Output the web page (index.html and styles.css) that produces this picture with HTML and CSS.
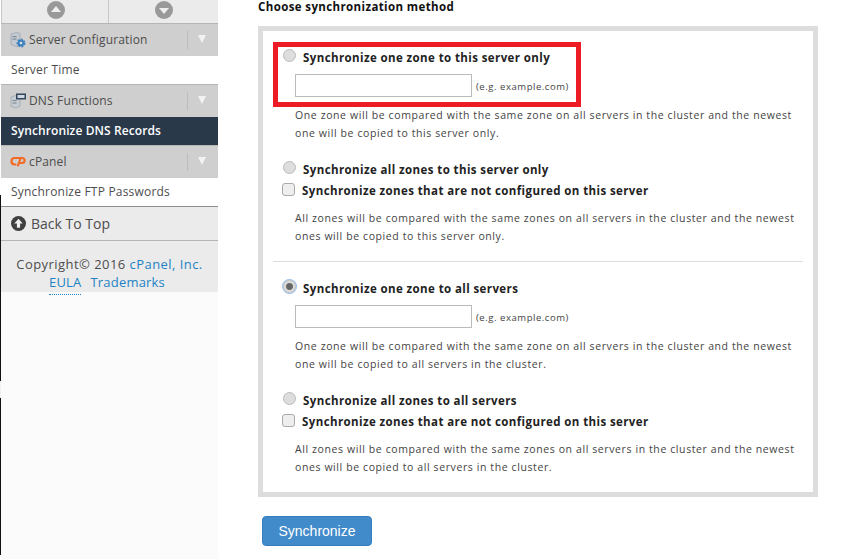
FILE: index.html
```html
<!DOCTYPE html>
<html lang="en">
<head>
    <meta charset="UTF-8">
    <title>Synchronize DNS Records</title>
    <link rel="stylesheet" href="styles.css">
</head>
<body>
    <div class="page">
        <div class="left-edge"></div>

        <!-- Sidebar -->
        <div class="sidebar">
            <div class="scroll-bar">
                <div class="scroll-cell up">
                    <svg width="20" height="20" viewBox="0 0 20 20"><circle cx="10" cy="10" r="9" fill="#999"/><path d="M10 6L15 12H5Z" fill="#eee"/></svg>
                </div>
                <div class="scroll-cell down">
                    <svg width="20" height="20" viewBox="0 0 20 20"><circle cx="10" cy="10" r="9" fill="#999"/><path d="M10 14L15 8H5Z" fill="#eee"/></svg>
                </div>
            </div>

            <div class="nav-group">
                <svg class="nav-icon" width="16" height="16" viewBox="0 0 16 16">
                    <path d="M1 2L7 0.500L10 1.500V9L7 15L1 12.500Z" fill="#c3cad1" stroke="#98a2ad" stroke-width="0.7"/>
                    <rect x="2.500" y="4" width="4" height="1.200" fill="#7e8a96"/>
                    <rect x="2.500" y="6.500" width="4" height="1.200" fill="#7e8a96"/>
                    <circle cx="11" cy="11" r="3.300" fill="#3f81bd" stroke="#3f81bd" stroke-width="2.400" stroke-dasharray="1.700 1.300"/>
                    <circle cx="11" cy="11" r="3.200" fill="#3f81bd"/>
                    <circle cx="11" cy="11" r="1.300" fill="#d6e4f0"/>
                </svg>
                <span class="nav-label">Server Configuration</span>
                <span class="nav-arrow"></span>
            </div>
            <div class="nav-item">Server Time</div>

            <div class="nav-group">
                <svg class="nav-icon" width="16" height="16" viewBox="0 0 16 16">
                    <path d="M1 4L6 2.500L10 4V13L6 15L1 13.500Z" fill="#c6ccd2" stroke="#98a2ad" stroke-width="0.7"/>
                    <rect x="2.500" y="7" width="4" height="1.100" fill="#7e8a96"/>
                    <rect x="2.500" y="9.500" width="4" height="1.100" fill="#7e8a96"/>
                    <rect x="6" y="0.500" width="10" height="6" fill="#33475e"/>
                    <rect x="7.500" y="2" width="7" height="3" fill="#cfd8e2"/>
                </svg>
                <span class="nav-label">DNS Functions</span>
                <span class="nav-arrow"></span>
            </div>
            <div class="nav-item active">Synchronize DNS Records</div>

            <div class="nav-group cpanel">
                <svg class="nav-icon" width="16" height="16" viewBox="0 0 16 16">
                    <path d="M7.500 4H4.500C0.500 4 0.500 10.500 4.500 10.500H5.500" fill="none" stroke="#f26b22" stroke-width="2.200" stroke-linecap="round"/>
                    <path d="M7.500 4H12C15.500 4 15.500 9 12 9H10.500M10.500 4.500L8 11.500" fill="none" stroke="#f26b22" stroke-width="2.200" stroke-linecap="round"/>
                </svg>
                <span class="nav-label">cPanel</span>
                <span class="nav-arrow"></span>
            </div>
            <div class="nav-item last">Synchronize FTP Passwords</div>

            <div class="back-top">
                <svg width="15" height="15" viewBox="0 0 16 16"><circle cx="8" cy="8" r="8" fill="#3f3f3f"/><path d="M8 3L12.500 8H9.700V12.500H6.300V8H3.500Z" fill="#eee"/></svg>
                <span>Back To Top</span>
            </div>

            <div class="copyright">
                <div>Copyright© 2016 <a href="#">cPanel, Inc.</a></div>
                <div class="copyright-links"><a href="#" class="eula">EULA</a><a href="#">Trademarks</a></div>
            </div>
        </div>

        <!-- Main Content -->
        <div class="main">
            <h4 class="section-title">Choose synchronization method</h4>
            <div class="method-box">
                <div class="option highlighted">
                    <label class="option-label"><span class="radio top"></span>Synchronize one zone to this server only</label>
                    <div class="zone-row">
                        <input type="text" class="zone-input">
                        <span class="hint">(e.g. example.com)</span>
                    </div>
                </div>
                <p class="desc first">One zone will be compared with the same zone on all servers in the cluster and the newest<br>one will be copied to this server only.</p>

                <div class="option second">
                    <label class="option-label"><span class="radio"></span>Synchronize all zones to this server only</label>
                    <label class="check-label"><span class="checkbox"></span>Synchronize zones that are not configured on this server</label>
                </div>
                <p class="desc tight">All zones will be compared with the same zones on all servers in the cluster and the newest<br>ones will be copied to this server only.</p>

                <hr class="divider">

                <div class="option">
                    <label class="option-label"><span class="radio checked"></span>Synchronize one zone to all servers</label>
                    <div class="zone-row">
                        <input type="text" class="zone-input">
                        <span class="hint">(e.g. example.com)</span>
                    </div>
                </div>
                <p class="desc">One zone will be compared with the same zone on all servers in the cluster and the newest<br>one will be copied to all servers in the cluster.</p>

                <div class="option second">
                    <label class="option-label"><span class="radio"></span>Synchronize all zones to all servers</label>
                    <label class="check-label"><span class="checkbox"></span>Synchronize zones that are not configured on this server</label>
                </div>
                <p class="desc tight">All zones will be compared with the same zones on all servers in the cluster and the newest<br>ones will be copied to all servers in the cluster.</p>
            </div>
            <button class="sync-button">Synchronize</button>
        </div>
    </div>
</body>
</html>
```

FILE: styles.css
```css
* {
    margin: 0;
    padding: 0;
    box-sizing: border-box;
}

body {
    font-family: "Open Sans", sans-serif;
    background: #fff;
    overflow: hidden;
}

a {
    color: #1e82c4;
    text-decoration: none;
}

.page {
    display: flex;
    height: 559px;
}

.left-edge {
    width: 1px;
    background: linear-gradient(#fff 195px, #111 195px, #111 381px, #f2f2f2 381px, #f2f2f2 398px, #111 398px, #111 555px, #fff 555px);
}

/* Sidebar */
.sidebar {
    width: 217px;
    background: #fbfbfb;
    color: #4d4d4d;
    font-size: 12px;
    letter-spacing: 0.2px;
}

.scroll-bar {
    display: flex;
    height: 24px;
    background: #ebebeb;
    border-bottom: 1px solid #b5b5b5;
}

.scroll-cell {
    display: flex;
    justify-content: center;
    align-items: flex-start;
    border-left: 1px solid #c8c8c8;
}

.scroll-cell.up {
    width: 107px;
    padding-left: 1px;
}

.scroll-cell.down {
    width: 110px;
}

.nav-group {
    display: flex;
    align-items: center;
    height: 32px;
    padding-left: 9px;
    background: #cfcfcf;
}

.nav-group.cpanel {
    height: 33px;
    border-top: 1px solid #b5b5b5;
}

.nav-icon {
    margin-right: 3px;
}

.nav-label {
    flex: 1;
    padding-bottom: 2px;
    letter-spacing: 0.15px;
}

.nav-arrow {
    position: relative;
    width: 31px;
    height: 18px;
    border-left: 1px solid #bdbdbd;
}

.nav-arrow::after {
    content: "";
    position: absolute;
    left: 10px;
    top: 4px;
    border-left: 4px solid transparent;
    border-right: 4px solid transparent;
    border-top: 8px solid #f2f2f2;
}

.nav-item {
    display: flex;
    align-items: center;
    height: 29px;
    padding-left: 10px;
    padding-bottom: 2px;
    background: #fff;
    border-bottom: 1px solid #b5b5b5;
}

.nav-item.active {
    height: 28px;
    background: #29394a;
    border-bottom: none;
    color: #fff;
    font-weight: 600;
    letter-spacing: 0.1px;
}

.nav-item.last {
    border-bottom-color: #8f8f8f;
}

.back-top {
    display: flex;
    align-items: center;
    gap: 5px;
    height: 34px;
    padding-left: 10px;
    background: #ebebeb;
    border-bottom: 1px solid #b5b5b5;
    font-size: 14px;
    letter-spacing: 0;
}

.copyright {
    height: 51px;
    padding-top: 14px;
    background: #ebebeb;
    text-align: center;
    font-size: 13px;
    line-height: 18px;
    letter-spacing: 0.45px;
}

.copyright-links {
    display: flex;
    justify-content: center;
    gap: 9px;
    padding-right: 5px;
    letter-spacing: 0.2px;
}

.eula {
    border-bottom: 1px dotted #1e82c4;
    padding-bottom: 3px;
}

/* Main Content */
.main {
    padding-left: 40px;
    color: #444;
}

.section-title {
    font-size: 11.500px;
    font-weight: 700;
    color: #111;
    line-height: 14px;
    letter-spacing: 0.38px;
}

.method-box {
    width: 560px;
    height: 471px;
    margin-top: 12px;
    padding: 11px 10px 0 20px;
    border: 5px solid #ddd;
}

.option-label,
.check-label {
    display: flex;
    align-items: center;
    height: 16px;
    padding-bottom: 2px;
    font-size: 11.500px;
    font-weight: 700;
    color: #222;
    letter-spacing: 0.4px;
}

.radio {
    width: 13px;
    height: 13px;
    margin-right: 7px;
    margin-bottom: 3px;
    border-radius: 50%;
    border: 1px solid #bbb;
    background: #ddd;
}

.radio.top {
    margin-bottom: 4px;
}

.radio.checked {
    background: radial-gradient(circle, #666 0 3px, #ddd 4px);
    box-shadow: 0 0 0 1px #9cc0ee;
}

.checkbox {
    width: 13px;
    height: 13px;
    margin-left: -1px;
    margin-right: 7px;
    margin-bottom: 2px;
    border-radius: 3px;
    border: 1px solid #aaa;
    background: #eee;
}

.highlighted {
    width: 308px;
    height: 65px;
    margin-left: -10px;
    padding: 3px 0 0 5px;
    border: 5px solid #ed1c24;
}

.zone-row {
    display: flex;
    align-items: center;
    gap: 4px;
    margin: 8px 0 0 12px;
}

.zone-input {
    width: 177px;
    height: 23px;
    border: 1px solid #bbb;
}

.hint {
    margin-top: 2px;
    font-size: 9.500px;
    letter-spacing: 0.55px;
}

.desc {
    margin: 9px 0 0 12px;
    font-size: 10.500px;
    line-height: 18px;
    letter-spacing: 0.6px;
}

.desc.first {
    margin-top: -1px;
}

.desc.tight {
    margin-top: 10px;
}

.option.second {
    margin-top: 20px;
}

.check-label {
    margin-top: 5px;
}

.divider {
    margin: 16px 0 19px -10px;
    border: none;
    border-top: 1px solid #ddd;
}

.sync-button {
    display: block;
    width: 110px;
    height: 30px;
    margin: 19px 0 0 4px;
    background: #428bca;
    border: 1px solid #357ebd;
    border-radius: 4px;
    color: #fff;
    font-family: "Liberation Sans", sans-serif;
    font-size: 14px;
}
```
